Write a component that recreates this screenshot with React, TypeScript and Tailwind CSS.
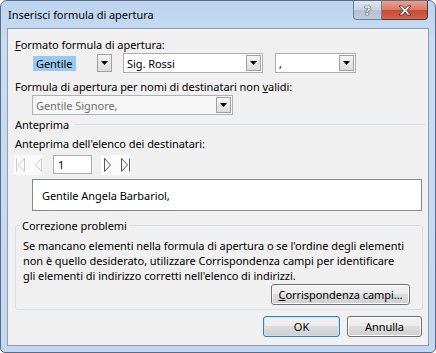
import React from "react";

function Arrow() {
  return (
    <svg width="7" height="4" viewBox="0 0 7 4">
      <path d="M0 0H7L3.5 4Z" fill="#000" />
    </svg>
  );
}

function DropBtn() {
  return (
    <div className="m-[1px] w-[15px] self-stretch border border-[#a0a0a0] bg-gradient-to-b from-[#f4f4f4] to-[#dcdcdc] flex items-center justify-center">
      <Arrow />
    </div>
  );
}

function Combo({ w, text, bg = "bg-white", border = "border-[#abadb3]", textCls = "", ml = "" }: { w: string; text: React.ReactNode; bg?: string; border?: string; textCls?: string; ml?: string }) {
  return (
    <div className={`${w} ${ml} h-[20px] border ${border} ${bg} flex items-center`}>
      <div className={`flex-1 pl-[3px] ${textCls}`}>{text}</div>
      <DropBtn />
    </div>
  );
}

function NavIcon({ kind, color }: { kind: "first" | "prev" | "next" | "last"; color: string }) {
  return (
    <svg width="10" height="14" viewBox="0 0 10 14" fill="none" stroke={color} strokeWidth="1">
      {kind === "first" && <><path d="M1.5 0.5V13.5" /><path d="M9.5 0.5L3.5 7L9.5 13.5Z" /></>}
      {kind === "prev" && <path d="M8.5 0.5L2.5 7L8.5 13.5Z" />}
      {kind === "next" && <path d="M1.5 0.5L7.5 7L1.5 13.5Z" />}
      {kind === "last" && <><path d="M0.5 0.5L6.5 7L0.5 13.5Z" /><path d="M8.5 0.5V13.5" /></>}
    </svg>
  );
}

function Button({ children, w, def = false }: { children: React.ReactNode; w: string; def?: boolean }) {
  return (
    <div
      className={`${w} h-[21px] rounded-[3px] border ${def ? "border-[#3c7fb1]" : "border-[#707070]"} bg-[linear-gradient(#f2f2f2_0%,#ebebeb_50%,#dddddd_50%,#cfcfcf_100%)] flex items-center justify-center ${def ? "shadow-[inset_0_0_0_1px_#bfe3f7]" : "shadow-[inset_0_0_0_1px_#fbfbfb]"}`}
    >
      {children}
    </div>
  );
}

export default function App() {
  return (
    <div className="w-[436px] h-[353px] bg-white font-['Noto_Sans',sans-serif] text-[11px] tracking-[-0.05px] leading-[15px] text-black">
      <div className="relative h-full rounded-t-[7px] rounded-b-[5px] border border-[#5a6d88] bg-[linear-gradient(#bcd4ee,#c8dcf2_40px,#c3d8f0)] flex flex-col px-[6px] pb-[6px]">
        <div className="h-[27px] flex items-center pl-[1px] text-[#000]">Inserisci formula di apertura</div>

        <div className="absolute top-0 right-[7px] flex h-[19px]">
          <div className="w-[29px] rounded-bl-[4px] border border-t-0 border-[#6f7f94] bg-[linear-gradient(#dfe7f1,#c7d3e1_50%,#b4c3d5_50%,#bcc9d9)] flex items-center justify-center">
            <span className="text-white font-bold text-[13px] leading-none [text-shadow:0_0_1px_#223,0_0_1px_#223,0_0_1px_#223]">?</span>
          </div>
          <div className="w-[46px] rounded-br-[4px] border border-l-0 border-t-0 border-[#6b2a22] bg-[linear-gradient(#e8a493,#d57a65_50%,#c7482f_50%,#d06650)] flex items-center justify-center">
            <svg width="14" height="11" viewBox="0 0 14 11">
              <path d="M1 1H4.5L7 4L9.5 1H13L8.8 5.5L13 10H9.5L7 7L4.5 10H1L5.2 5.5Z" fill="#fff" stroke="#3a1b16" strokeWidth="0.8" strokeLinejoin="round" />
            </svg>
          </div>
        </div>

        <div className="flex-1 border border-[#8c9db5] bg-[#f0f0f0] flex flex-col pl-[7px] pr-[6px]">
          <div className="mt-[8px]"><span className="underline">F</span>ormato formula di apertura:</div>
          <div className="mt-[1px] flex items-center">
            <div className="ml-[17px] w-[81px] h-[20px] flex items-center">
              <div className="flex-1 pl-[1px] flex items-center">
                <span className="bg-[#99c9ef] px-[3px] h-[15px] flex items-center">Gentile</span>
              </div>
              <DropBtn />
            </div>
            <Combo ml="ml-[10px]" w="w-[140px]" text="Sig. Rossi" />
            <Combo ml="ml-[12px]" w="w-[81px]" text="," />
          </div>

          <div className="mt-[6px]">Formula di apertura per nomi di destinatari non <span className="underline">v</span>alidi:</div>
          <div className="mt-[1px] flex">
            <Combo ml="ml-[17px]" w="w-[201px]" text="Gentile Signore," bg="bg-[#f7f7f7]" border="border-[#adb2b5]" textCls="text-[#6d6d6d]" />
          </div>

          <div className="mt-[2px] flex items-center">
            <span>Anteprima</span>
            <div className="flex-1 ml-[6px] mr-[-3px] h-px bg-[#d5dfe5]" />
          </div>
          <div className="mt-[4px]">Anteprima dell&apos;elenco dei destinatari:</div>
          <div className="mt-[4px] flex items-center h-[19px]">
            <div className="-ml-[1px] w-[29px] h-[20px] bg-[#fafafa] flex items-center gap-[8px] pl-[1px]">
              <NavIcon kind="first" color="#c9c9c9" />
              <NavIcon kind="prev" color="#c9c9c9" />
            </div>
            <div className="ml-[10px] w-[39px] h-[19px] border border-[#abadb3] bg-white flex items-center pl-[4px]">1</div>
            <div className="ml-[9px] w-[30px] h-[20px] bg-[#fcfcfc] flex items-center gap-[8px] pl-[2px]">
              <NavIcon kind="next" color="#555" />
              <NavIcon kind="last" color="#555" />
            </div>
          </div>
          <div className="mt-[5px] ml-[17px] h-[32px] border border-[#828790] bg-white flex items-center pl-[9px]">
            Gentile Angela Barbariol,
          </div>

          <div className="relative mt-[14px] -mr-[1px] border border-[#d5dfe5] rounded-[3px] flex flex-col pl-[7px] pr-[12px] pt-[12px] pb-[4px]">
            <span className="absolute -top-[8px] left-[4px] px-[2px] bg-[#f0f0f0]">Correzione problemi</span>
            <div className="whitespace-nowrap">
              Se mancano elementi nella formula di apertura o se l&apos;ordine degli elementi
              <br />
              non è quello desiderato, utilizzare Corrispondenza campi per identificare
              <br />
              gli elementi di indirizzo corretti nell&apos;elenco di indirizzi.
            </div>
            <div className="mt-[1px] flex justify-end">
              <Button w="w-[139px]"><span><span className="underline">C</span>orrispondenza campi...</span></Button>
            </div>
          </div>

          <div className="mt-[6px] flex justify-end gap-[7px]">
            <Button w="w-[77px]" def>OK</Button>
            <Button w="w-[75px]">Annulla</Button>
          </div>
        </div>
      </div>
    </div>
  );
}
